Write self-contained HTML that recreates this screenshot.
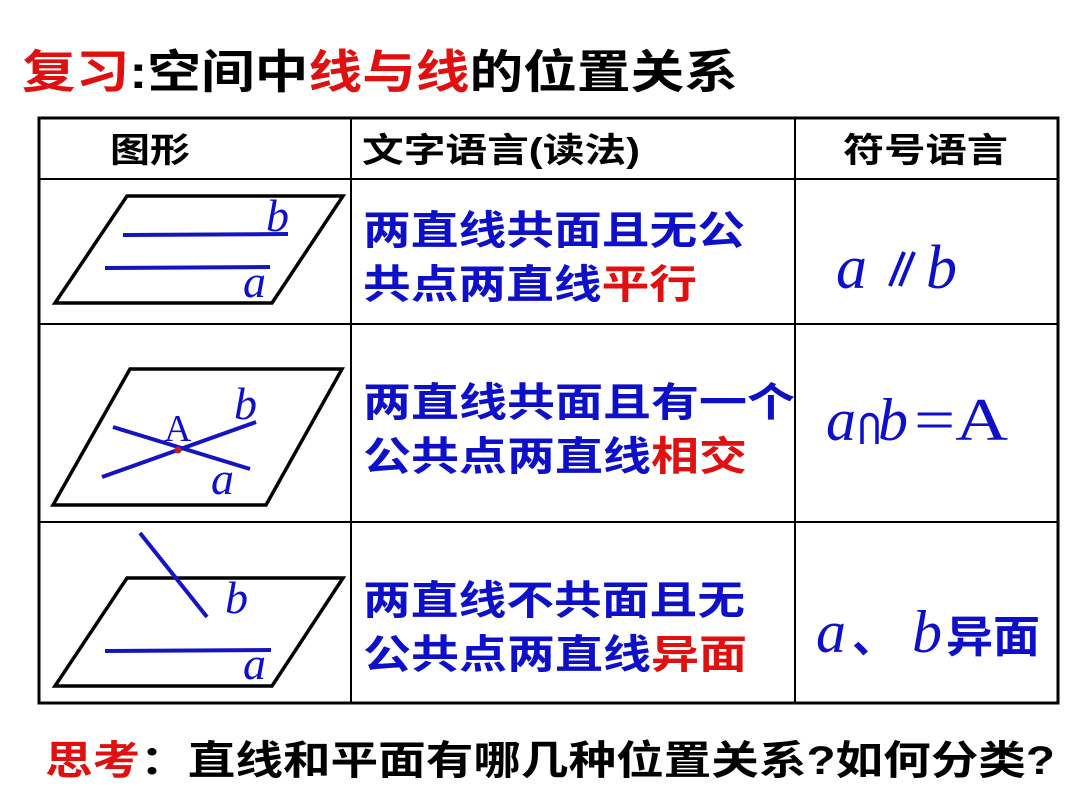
<!DOCTYPE html>
<html><head><meta charset="utf-8"><style>
html,body{margin:0;padding:0;background:#fff;width:1080px;height:810px;overflow:hidden}
svg{display:block}
.c{font-family:"Liberation Sans","Noto Sans CJK SC",sans-serif;font-weight:bold}
.m{font-family:"Liberation Serif",serif;font-style:italic;fill:#0d10c8}
</style></head><body>
<svg width="1080" height="810" viewBox="0 0 1080 810">
<text class="c" x="22" y="88" font-size="46" textLength="716" lengthAdjust="spacingAndGlyphs"><tspan fill="#e01010">复习</tspan><tspan fill="#000">:空间中</tspan><tspan fill="#e01010">线与线</tspan><tspan fill="#000">的位置关系</tspan></text>
<rect x="39" y="118" width="1019" height="585" fill="none" stroke="#000" stroke-width="3"/>
<g stroke="#000" stroke-width="2">
<line x1="351" y1="118" x2="351" y2="703"/>
<line x1="795" y1="118" x2="795" y2="703"/>
<line x1="39" y1="179" x2="1058" y2="179"/>
<line x1="39" y1="324" x2="1058" y2="324"/>
<line x1="39" y1="522" x2="1058" y2="522"/>
</g>
<g class="c" fill="#000" font-size="34" font-weight="normal">
<text x="110" y="162" textLength="80" lengthAdjust="spacingAndGlyphs">图形</text>
<text x="362" y="162" textLength="278" lengthAdjust="spacingAndGlyphs">文字语言(读法)</text>
<text x="843" y="162" textLength="165" lengthAdjust="spacingAndGlyphs">符号语言</text>
</g>
<g class="c" fill="#0d10c8" font-size="40">
<text x="363" y="244" textLength="382" lengthAdjust="spacingAndGlyphs">两直线共面且无公</text>
<text x="363" y="298" textLength="334" lengthAdjust="spacingAndGlyphs">共点两直线<tspan fill="#e01010">平行</tspan></text>
<text x="363" y="416" textLength="432" lengthAdjust="spacingAndGlyphs">两直线共面且有一个</text>
<text x="363" y="470" textLength="384" lengthAdjust="spacingAndGlyphs">公共点两直线<tspan fill="#e01010">相交</tspan></text>
<text x="363" y="614" textLength="382" lengthAdjust="spacingAndGlyphs">两直线不共面且无</text>
<text x="363" y="668" textLength="384" lengthAdjust="spacingAndGlyphs">公共点两直线<tspan fill="#e01010">异面</tspan></text>
</g>
<text class="m" x="836" y="288" font-size="62">a</text>
<path d="M890 286 L904 252 M900 286 L914 252" stroke="#0d10c8" stroke-width="4"/>
<text class="m" x="926" y="288" font-size="62">b</text>
<text class="m" x="826" y="440" font-size="60">a</text>
<path d="M862 444 V422 A7.5 7.5 0 0 1 877 422 V444" fill="none" stroke="#0d10c8" stroke-width="3.5"/>
<text class="m" x="878" y="440" font-size="60">b</text>
<text x="914" y="440" font-size="60" font-family="Liberation Serif,serif" fill="#0d10c8" textLength="94" lengthAdjust="spacingAndGlyphs">=A</text>
<text class="m" x="816" y="652" font-size="60">a</text>
<text x="852" y="652" font-size="44" class="c" fill="#0d10c8">、</text>
<text class="m" x="912" y="652" font-size="60">b</text>
<text class="c" x="946" y="652" font-size="44" fill="#0d10c8" textLength="94" lengthAdjust="spacingAndGlyphs">异面</text>
<g fill="none" stroke="#000" stroke-width="3.5">
<polygon points="127,196 343,196 272,303 55,303"/>
<polygon points="130,369 342,369 266,505 53,505"/>
<polygon points="127,578 343,578 272,686 55,686"/>
</g>
<g stroke="#1414c0" stroke-width="4">
<line x1="123" y1="235" x2="288" y2="234"/>
<line x1="105" y1="268" x2="270" y2="267"/>
<line x1="113" y1="427" x2="250" y2="469"/>
<line x1="102" y1="477" x2="256" y2="422"/>
<line x1="140" y1="533" x2="207" y2="617"/>
<line x1="105" y1="651" x2="271" y2="650"/>
</g>
<circle cx="178" cy="450" r="3.5" fill="#c02020"/>
<g class="m" font-size="46">
<text x="266" y="231">b</text>
<text x="243" y="297">a</text>
<text x="234" y="419">b</text>
<text x="211" y="494">a</text>
<text x="225" y="613">b</text>
<text x="243" y="679">a</text>
</g>
<text x="164" y="441" font-size="38" font-family="Liberation Serif,serif" fill="#0d10c8">A</text>
<text class="c" x="45" y="774" font-size="40" textLength="1010" lengthAdjust="spacingAndGlyphs"><tspan fill="#e01010">思考</tspan><tspan fill="#000">：直线和平面有哪几种位置关系?如何分类?</tspan></text>
</svg>
</body></html>
